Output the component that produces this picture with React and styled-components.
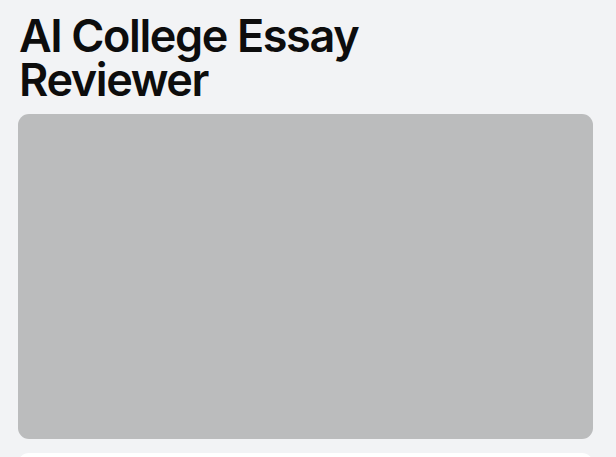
import styled, { createGlobalStyle } from "styled-components";

const Global = createGlobalStyle`
  html, body {
    margin: 0;
    background: #f2f3f5;
    font-family: Inter, "Noto Sans", sans-serif;
    overflow: hidden;
  }
`;

const Page = styled.main`
  padding: 14px 23px 0 18px;
  display: flex;
  flex-direction: column;
`;

const Title = styled.h1`
  margin: 0 0 12px 1px;
  font-size: 45px;
  line-height: 44px;
  font-weight: 600;
  letter-spacing: -1.4px;
  color: #0d0d0d;
  max-width: 380px;
`;

const Preview = styled.div`
  height: 325px;
  border-radius: 11px;
  background: #bbbcbd;
`;

const Card = styled.section`
  margin-top: 14px;
  height: 120px;
  border-radius: 11px;
  background: #ffffff;
`;

export default function App() {
  return (
    <>
      <Global />
      <Page>
        <Title>AI College Essay Reviewer</Title>
        <Preview />
        <Card />
      </Page>
    </>
  );
}
